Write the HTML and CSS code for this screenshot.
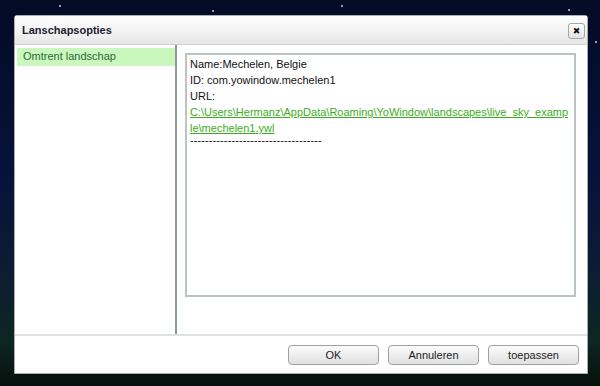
FILE: index.html
```html
<!DOCTYPE html>
<html lang="nl">
<head>
  <meta charset="UTF-8">
  <title>Lanschapsopties</title>
  <link rel="stylesheet" href="styles.css">
</head>
<body>
  <div class="dialog">
    <div class="titlebar">
      <span class="title">Lanschapsopties</span>
      <button class="close" aria-label="Sluiten">&#x2716;</button>
    </div>
    <div class="main">
      <ul class="sidebar">
        <li class="item active">Omtrent landschap</li>
      </ul>
      <div class="pane">
        <div class="infobox">
          <div>Name:Mechelen, Belgie</div>
          <div>ID: com.yowindow.mechelen1</div>
          <div>URL:</div>
          <a class="url" href="#">C:\Users\Hermanz\AppData\Roaming\YoWindow\landscapes\live_sky_example\mechelen1.ywl</a>
          <div class="rule">-----------------------------------</div>
        </div>
      </div>
    </div>
    <div class="footer">
      <button class="btn">OK</button>
      <button class="btn">Annuleren</button>
      <button class="btn">toepassen</button>
    </div>
  </div>
</body>
</html>
```

FILE: styles.css
```css
body {
  margin: 0;
  width: 600px;
  height: 386px;
  overflow: hidden;
  font-family: "Liberation Sans", Arial, sans-serif;
  background:
    radial-gradient(circle at 60px 6px, #8fa0c0 0.7px, transparent 1.2px),
    radial-gradient(circle at 213px 11px, #8fa0c0 0.7px, transparent 1.2px),
    radial-gradient(circle at 342px 6px, #8fa0c0 0.7px, transparent 1.2px),
    radial-gradient(circle at 569px 10px, #8fa0c0 0.7px, transparent 1.2px),
    radial-gradient(circle at 596px 42px, #8fa0c0 0.7px, transparent 1.2px),
    linear-gradient(180deg, #040b26 0%, #07123a 45%, #0c1c34 70%, #0e2622 88%, #06100c 100%);
}
.dialog {
  box-sizing: border-box;
  width: 574px;
  height: 359px;
  margin: 15px 0 0 14px;
  background: #fff;
  border: 1px solid #a9adad;
  border-radius: 3px 3px 0 0;
  display: flex;
  flex-direction: column;
}
.titlebar {
  height: 28px;
  display: flex;
  align-items: center;
  justify-content: space-between;
  padding: 0 2px 0 7px;
  background: linear-gradient(180deg, #fdfdfd 0%, #f1f1f1 60%, #e6e6e6 100%);
  border-bottom: 1px solid #cfd2d2;
}
.title {
  font-size: 11px;
  font-weight: bold;
  color: #1e2030;
}
.close {
  width: 17px;
  height: 16px;
  padding: 0;
  margin-top: 1px;
  border: 1px solid #a3a8a8;
  border-radius: 3px;
  background: linear-gradient(180deg, #ffffff 0%, #e3e3e3 100%);
  font-size: 9px;
  line-height: 14px;
  color: #111;
  font-family: "DejaVu Sans", sans-serif;
}
.main {
  flex: 1;
  display: flex;
  border-bottom: 2px solid #dfe2e2;
}
.sidebar {
  width: 158px;
  margin: 0;
  padding: 3px 0 0 2px;
  list-style: none;
  border-right: 2px solid #8c9a9a;
}
.item {
  height: 18px;
  line-height: 17px;
  padding-left: 6px;
  font-size: 11px;
  color: #2e6a3a;
}
.item.active {
  background: #c9f7bd;
}
.pane {
  flex: 1;
  padding: 8px 11px 37px 8px;
  display: flex;
}
.infobox {
  flex: 1;
  border: 2px solid #bcc3c3;
  padding: 1px 5px 0 3px;
  font-size: 11px;
  line-height: 16px;
  color: #111;
}
.url {
  display: block;
  color: #3cad22;
  text-decoration: underline;
  word-break: break-all;
}
.rule {
  margin-top: -2px;
  line-height: 12px;
  letter-spacing: 0.1px;
}
.footer {
  height: 37px;
  display: flex;
  justify-content: flex-end;
  align-items: center;
  gap: 9px;
  padding: 0 8px 0 0;
}
.btn {
  width: 91px;
  height: 20px;
  padding: 0;
  border: 1px solid #9da2a2;
  border-radius: 4px;
  background: linear-gradient(180deg, #fbfbfb 0%, #ececec 55%, #e0e0e0 100%);
  font-family: "Liberation Sans", Arial, sans-serif;
  font-size: 11px;
  color: #1c1c1c;
}
```
